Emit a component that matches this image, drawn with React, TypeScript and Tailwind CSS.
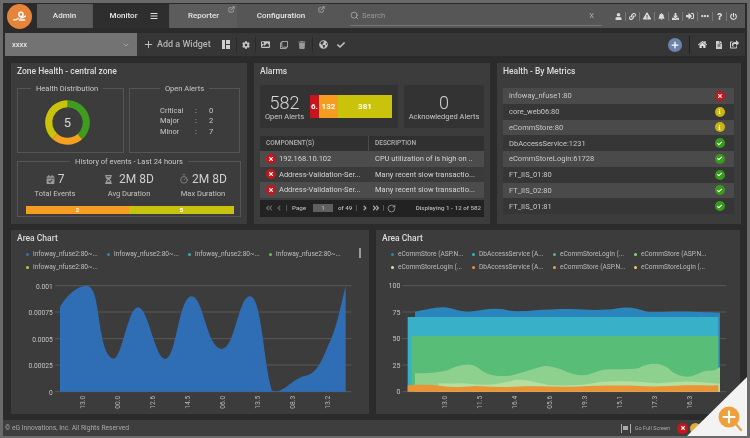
import React from "react";
import { FaUser, FaLink, FaBell, FaDownload, FaSignInAlt, FaEllipsisH, FaQuestion, FaPowerOff, FaCog, FaImage, FaRegClone, FaTrash, FaGlobeAmericas, FaCheck, FaHome, FaFileAlt, FaShareSquare, FaExclamationTriangle, FaBars, FaTimes, FaInfo, FaAngleDoubleLeft, FaAngleDoubleRight, FaAngleLeft, FaAngleRight, FaHourglassHalf, FaCalendarCheck } from "react-icons/fa";
import { ChevronDown, Plus, Search, ExternalLink, RotateCw, Timer } from "lucide-react";

function Card({ title, className, children }: { title: string; className: string; children?: React.ReactNode }) {
  return (
    <section className={`bg-[#3c3c3c] flex flex-col ${className}`}>
      <h2 className="h-[17px] shrink-0 flex items-center text-[8.5px] text-[#dcdcdc] font-medium px-[6px]">{title}</h2>
      {children}
    </section>
  );
}

function Box({ title, className, legendClass, children }: { title: string; className: string; legendClass?: string; children?: React.ReactNode }) {
  return (
    <fieldset className={`border border-[#555] min-w-0 ${className}`}>
      <legend className={`px-[5px] text-[7.5px] leading-[9px] text-[#c8c8c8] ${legendClass ?? "mx-auto"}`}>{title}</legend>
      {children}
    </fieldset>
  );
}

function Status({ kind }: { kind: "x" | "i" | "ok" }) {
  const bg = kind === "x" ? "bg-[#c4161c]" : kind === "i" ? "bg-[#c9b50f]" : "bg-[#399a1d]";
  return (
    <span className={`w-[10px] h-[10px] rounded-full flex items-center justify-center text-white shrink-0 ${bg}`}>
      {kind === "x" && <FaTimes size={6} />}
      {kind === "i" && <FaInfo size={5} />}
      {kind === "ok" && <FaCheck size={5} />}
    </span>
  );
}

const Sep = () => <span className="w-px h-[9px] bg-[#777]" />;

function TopTab({ label, active, ext, className }: { label: string; active?: boolean; ext?: boolean; className: string }) {
  return (
    <div className={`relative h-full flex items-center justify-center text-[8px] font-medium ${active ? "bg-[#2e2e2e] text-[#e6e6e6] pl-[6px]" : "bg-[#5c5c5c] text-[#e4e4e4]"} ${className}`}>
      {label}
      {active && <FaBars size={8} className="ml-[13px] text-[#e0e0e0]" />}
      {ext && <ExternalLink size={7} className="absolute right-[2px] top-[2px] text-[#ccc]" />}
    </div>
  );
}

function Stat({ icon, value, label }: { icon: React.ReactNode; value: string; label: string }) {
  return (
    <div className="flex flex-col items-center w-[75px]">
      <div className="flex items-center gap-[3px] text-[12px] leading-[14px] text-[#d0d0d0]">{icon}<span>{value}</span></div>
      <div className="text-[7.5px] leading-[9px] mt-[2.5px] text-[#c4c4c4] whitespace-nowrap">{label}</div>
    </div>
  );
}

function Donut() {
  const arc = (a: number, b: number) => {
    const p = (d: number) => [50 + 40 * Math.sin((d * Math.PI) / 180), 50 - 40 * Math.cos((d * Math.PI) / 180)];
    const [x1, y1] = p(a);
    const [x2, y2] = p(b);
    return `M${x1} ${y1}A40 40 0 0 1 ${x2} ${y2}`;
  };
  return (
    <div className="relative w-[47px] h-[47px] ml-[26px] mt-[6px]">
      <svg viewBox="0 0 100 100" className="w-full h-full" fill="none" strokeWidth="15">
        <path d={arc(0, 139)} stroke="#3f9c1f" />
        <path d={arc(139, 222)} stroke="#f6a11f" />
        <path d={arc(222, 360)} stroke="#c9c30c" />
      </svg>
      <span className="absolute inset-0 flex items-center justify-center text-[13px] text-[#d8d8d8]">5</span>
    </div>
  );
}

function Legend({ items, colors }: { items: string[]; colors: string[] }) {
  return (
    <div className="grid grid-cols-[repeat(4,81px)] gap-y-[4.5px] pl-[14px] pt-[3px] text-[6.6px] leading-[8.5px] text-[#bdbdbd]">
      {items.map((t, i) => (
        <div key={i} className="flex items-center gap-[4px] whitespace-nowrap">
          <span className="w-[3px] h-[3px] rounded-full ml-[1px]" style={{ background: colors[i] }} />
          {t}
        </div>
      ))}
    </div>
  );
}

const gridYs = [172, 251, 331, 410, 490];

function Left() {
  const labels = ["0.001", "0.00075", "0.0005", "0.00025", "0"];
  const xs: [number, string][] = [[250, "13.0"], [355, "00.0"], [460, "12.6"], [565, "14.5"], [670, "06.0"], [775, "13.5"], [880, "08.3"], [985, "13.2"]];
  return (
    <svg viewBox="33 140 1074 417" className="w-[358px] h-[139px] shrink-0" fontFamily="Roboto, sans-serif">
      {gridYs.map((y, i) => (
        <g key={y}>
          <line x1="165" x2="1054" y1={y} y2={y} stroke="#5f5f5f" strokeWidth="2.5" />
          <text x="158" y={y + 9} textAnchor="end" fontSize="20" fill="#c6c6c6">{labels[i]}</text>
        </g>
      ))}
      <path fill="#2f6db5" d="M180,490 L180,235 C200,200 235,170 260,172 C290,175 290,240 305,320 C315,380 335,395 345,390 C370,370 385,235 415,237 C445,240 465,390 495,392 C530,392 535,205 575,204 C610,204 620,360 665,362 C705,362 715,204 750,204 C785,204 790,400 815,485 C825,495 840,488 860,475 C885,455 900,445 925,440 C950,430 965,400 985,350 C1010,300 1020,240 1037,172 L1037,490 Z" />
      {xs.map(([x, t]) => (
        <text key={t} x={x} y={522} textAnchor="middle" fontSize="20" fill="#b8b8b8" transform={`rotate(-90 ${x} 522)`} dominantBaseline="middle">{t}</text>
      ))}
    </svg>
  );
}

function Right() {
  const labels = ["100", "75", "50", "25", "0"];
  const xs: [number, string][] = [[210, "13.0"], [315, "11.5"], [420, "16.4"], [525, "05.6"], [630, "19.3"], [735, "15.1"], [840, "17.3"], [945, "16.3"]];
  return (
    <svg viewBox="3 140 1092 417" className="w-[364px] h-[139px] shrink-0" fontFamily="Roboto, sans-serif">
      {gridYs.map((y, i) => (
        <g key={y}>
          <line x1="82" x2="1054" y1={y} y2={y} stroke="#5f5f5f" strokeWidth="2.5" />
          <text x="76" y={y + 8} textAnchor="end" fontSize="21" fill="#c6c6c6">{labels[i]}</text>
        </g>
      ))}
      <path fill="#2b85bd" d="M120,490 L120,250 C150,245 180,235 210,237 C235,240 255,252 285,250 C320,246 350,238 385,243 C410,250 440,250 480,246 C530,243 580,240 640,244 C670,246 710,244 730,240 C760,234 785,240 820,251 C860,252 900,249 950,250 C990,252 1010,251 1035,253 L1035,490 Z" />
      <path fill="#38b0c8" d="M98,490 L98,266 L1030,266 L1030,490 Z" />
      <path fill="#58bd76" d="M110,490 L110,323 L1030,323 L1030,490 Z" />
      <path fill="#8ed08e" d="M120,490 L120,435 C150,435 190,433 220,425 C250,410 280,402 305,415 C330,435 350,445 395,443 C430,440 470,420 510,413 C550,412 580,440 620,441 C650,442 660,425 700,423 C730,422 760,425 790,420 C820,404 850,400 880,420 C900,440 925,448 950,444 C975,435 990,425 1010,427 C1020,426 1030,420 1035,416 L1035,490 Z" />
      <path fill="#b3dfa0" d="M190,490 L190,465 C220,467 260,462 290,467 C330,472 370,470 420,455 C450,452 480,462 520,470 C570,473 620,472 680,460 C730,457 780,458 850,465 C890,462 930,456 980,462 L1035,466 L1035,490 Z" />
      <path fill="#ec9335" d="M98,490 L98,471 C130,468 170,469 200,473 C230,478 260,476 300,473 C350,476 400,478 450,474 C500,472 550,477 600,475 C650,472 720,470 780,472 C830,476 880,474 930,471 C970,470 1000,472 1030,471 L1030,490 Z" />
      {xs.map(([x, t]) => (
        <text key={t} x={x} y={522} textAnchor="middle" fontSize="20" fill="#b8b8b8" transform={`rotate(-90 ${x} 522)`} dominantBaseline="middle">{t}</text>
      ))}
    </svg>
  );
}

const metrics: [string, "x" | "i" | "ok"][] = [
  ["infoway_nfuse1:80", "x"],
  ["core_web06:80", "i"],
  ["eCommStore:80", "i"],
  ["DbAccessService:1231", "ok"],
  ["eCommStoreLogin:61728", "ok"],
  ["FT_IIS_01:80", "ok"],
  ["FT_IIS_02:80", "ok"],
  ["FT_IIS_01:81", "ok"],
];

const rows = [
  ["192.168.10.102", "CPU utilization of is high on ..", "bg-[#4c4c4c]"],
  ["Address-Validation-Ser...", "Many recent slow transactio...", "bg-[#3a3a3a]"],
  ["Address-Validation-Ser...", "Many recent slow transactio...", "bg-[#4c4c4c]"],
];

export default function App() {
  return (
    <div className="relative w-[750px] h-[438px] overflow-hidden bg-[#2b2b2b] border-t-[3px] border-l-[3px] border-r-[3px] border-b-[2px] border-[#6a6a6a] flex flex-col font-['Roboto',sans-serif] blur-[0.35px]">
      {/* header */}
      <header className="h-[24px] mt-[1px] ml-[4px] mr-[2px] flex items-center shrink-0">
        <div className="w-[25px] h-[25px] rounded-full bg-[#e8843a] flex items-center justify-center shrink-0">
          <svg viewBox="0 0 24 24" className="w-[17px] h-[17px]" fill="none" stroke="#fff" strokeWidth="2">
            <circle cx="14" cy="9" r="3" />
            <path d="M3 17c4 0 6-1 8-3m0 3h9M13 14c3 0 6-1 8-3" />
          </svg>
        </div>
        <div className="ml-[5px] flex-1 h-full flex items-center bg-[#565656] min-w-0">
          <TopTab label="Admin" className="w-[55px]" />
          <TopTab label="Monitor" active className="w-[76px] ml-px" />
          <TopTab label="Reporter" ext className="w-[67px] ml-px" />
          <TopTab label="Configuration" ext className="w-[88px] ml-[2px] !bg-[#565656] pr-[4px]" />
          <div className="ml-[23px] w-[252px] h-[19px] border-b border-[#747474] flex items-center text-[7.5px] text-[#9a9a9a]">
            <Search size={9} className="text-[#b0b0b0] mr-[3px]" />
            <span className="flex-1">Search</span>
            <span className="mr-[8px] text-[#b0b0b0]">X</span>
          </div>
          <div className="ml-auto pr-[8px] flex items-center gap-[3px] text-[#dcdcdc]">
            <FaUser size={7} /><Sep /><FaLink size={7} /><Sep /><FaExclamationTriangle size={8} /><Sep /><FaBell size={7} /><Sep /><FaDownload size={7} /><Sep /><FaSignInAlt size={8} /><Sep /><FaEllipsisH size={8} /><Sep /><FaQuestion size={7} /><Sep /><FaPowerOff size={7} />
          </div>
        </div>
      </header>
      {/* toolbar */}
      <div className="h-[23px] mt-[5px] ml-[2px] mr-[2px] flex items-center bg-[#363636] shrink-0 text-[#c4c4c4]">
        <div className="w-[132px] h-full bg-[#737373] flex items-center justify-between pl-[7px] pr-[7px] text-[7.5px] text-[#e2e2e2]">
          <span className="font-medium">xxxx</span>
          <ChevronDown size={8} className="text-[#bbb]" />
        </div>
        <Plus size={11} className="ml-[6px] text-[#c8c8c8]" />
        <span className="ml-[3px] text-[9px] font-medium text-[#b4b4b4] whitespace-nowrap">Add a Widget</span>
        <div className="ml-[11px] w-[8px] h-[9px] grid grid-cols-2 grid-rows-2 gap-px shrink-0">
          <span className="row-span-2 bg-[#d0d0d0]" /><span className="bg-[#d0d0d0]" /><span className="bg-[#d0d0d0]" />
        </div>
        <span className="ml-[6px] w-px h-[16px] bg-[#2a2a2a]" />
        <FaCog size={8} className="ml-[5px]" />
        <span className="ml-[5px] w-px h-[16px] bg-[#2a2a2a]" />
        <FaImage size={9} className="ml-[5px]" />
        <FaRegClone size={8} className="ml-[10px]" />
        <FaTrash size={8} className="ml-[10px] text-[#999]" />
        <span className="ml-[6px] w-px h-[16px] bg-[#2a2a2a]" />
        <FaGlobeAmericas size={9} className="ml-[6px]" />
        <FaCheck size={8} className="ml-[9px]" />
        <span className="ml-auto w-[14px] h-[14px] rounded-full bg-[#6b84ab] flex items-center justify-center text-white"><Plus size={10} strokeWidth={3} /></span>
        <span className="ml-[7px] w-px h-[18px] bg-[#222]" />
        <FaHome size={9} className="ml-[8px] text-[#ddd]" />
        <FaFileAlt size={8} className="ml-[8px] text-[#ccc]" />
        <FaShareSquare size={9} className="ml-[7px] mr-[6px] text-[#ccc]" />
      </div>
      {/* row 1 */}
      <div className="mt-[7px] ml-[8px] flex gap-[7px] h-[161px] shrink-0">
        <Card title="Zone Health - central zone" className="w-[236px]">
          <div className="flex gap-[5px] px-[6px] mt-[4px]">
            <Box title="Health Distribution" legendClass="ml-[13px]" className="w-[107px] h-[69px]"><Donut /></Box>
            <Box title="Open Alerts" className="w-[111px] h-[69px]">
              <div className="grid grid-cols-[30px_12px_auto] pl-[30px] pt-[12.5px] text-[7.5px] leading-[10.7px] text-[#c8c8c8]">
                <span>Critical</span><span className="text-center">:</span><span className="pl-[7px]">0</span>
                <span>Major</span><span className="text-center">:</span><span className="pl-[7px]">2</span>
                <span>Minor</span><span className="text-center">:</span><span className="pl-[7px]">7</span>
              </div>
            </Box>
          </div>
          <Box title="History of events - Last 24 hours" className="mx-[6px] mt-[4px] h-[60px]">
            <div className="flex pt-[6px]">
              <Stat icon={<FaCalendarCheck size={9} className="text-[#9a9a9a]" />} value="7" label="Total Events" />
              <Stat icon={<FaHourglassHalf size={9} className="text-[#9a9a9a] mr-[3px]" />} value="2M 8D" label="Avg Duration" />
              <Stat icon={<Timer size={10} className="text-[#8a8a8a]" />} value="2M 8D" label="Max Duration" />
            </div>
            <div className="ml-[8px] mr-[6px] mt-[8.5px] flex h-[8px] text-[6px] leading-[8px] font-bold text-white text-center">
              <span className="w-[103px] bg-[#f59c21]">2</span>
              <span className="flex-1 bg-[#c7c30e]">5</span>
            </div>
          </Box>
        </Card>

        <Card title="Alarms" className="w-[236px]">
          <div className="flex gap-[6px] px-[6px] mt-[5px]">
            <div className="w-[138px] h-[43px] bg-[#333] flex items-center">
              <div className="w-[49px] flex flex-col items-center shrink-0">
                <span className="text-[18px] leading-[19px] font-light text-[#d8d8d8]">582</span>
                <span className="text-[7.5px] leading-[9px] text-[#c8c8c8] whitespace-nowrap">Open Alerts</span>
              </div>
              <div className="w-[82px] h-[23px] flex text-[8px] font-bold text-white text-center leading-[23px] ml-px">
                <span className="w-[9px] bg-[#c5161d]">6.</span>
                <span className="w-[19px] bg-[#f59c21]">132</span>
                <span className="flex-1 bg-[#c9c30c]">381</span>
              </div>
            </div>
            <div className="w-[80px] h-[43px] bg-[#333] flex flex-col items-center justify-center">
              <span className="text-[18px] leading-[19px] font-light text-[#d0d0d0]">0</span>
              <span className="text-[7.5px] leading-[9px] text-[#c8c8c8] whitespace-nowrap">Acknowledged Alerts</span>
            </div>
          </div>
          <div className="mx-[6px] mt-[8px] h-[15px] bg-[#303030] flex text-[6.5px] leading-[15px] font-medium text-[#b0b0b0]">
            <div className="w-[109px] pl-[6px] border-r border-[#4a4a4a]">COMPONENT(S)</div>
            <div className="pl-[6px]">DESCRIPTION</div>
          </div>
          {rows.map((r, i) => (
            <div key={i} className={`mx-[6px] h-[15.6px] flex items-center text-[7.5px] text-[#d4d4d4] whitespace-nowrap ${r[2]}`}>
              <div className="w-[109px] pl-[6px] flex items-center gap-[3px]"><Status kind="x" /><span>{r[0]}</span></div>
              <div className="pl-[6px]">{r[1]}</div>
            </div>
          ))}
          <div className="mx-[6px] mt-[2px] h-[17px] bg-[#222] flex items-center pl-[5px] pr-[3px] text-[6.2px] font-medium text-[#b8b8b8] whitespace-nowrap">
            <FaAngleDoubleLeft size={8} className="text-[#666]" />
            <FaAngleLeft size={8} className="ml-[2px] text-[#666]" />
            <span className="ml-[3px] w-px h-[6px] bg-[#555]" />
            <span className="ml-[5px]">Page</span>
            <span className="ml-[7px] w-[20px] h-[8px] bg-[#5f5f5f] text-center leading-[8px]">1</span>
            <span className="ml-[5px]">of 49</span>
            <span className="ml-[4px] w-px h-[6px] bg-[#555]" />
            <FaAngleRight size={8} className="ml-[4px] text-[#aaa]" />
            <FaAngleDoubleRight size={8} className="ml-[3px] text-[#aaa]" />
            <span className="ml-[3px] w-px h-[6px] bg-[#555]" />
            <RotateCw size={9} className="ml-[3px] text-[#aaa]" />
            <span className="ml-auto">Displaying 1 - 12 of 582</span>
          </div>
        </Card>

        <Card title="Health - By Metrics" className="w-[244px]">
          <div className="ml-[6px] mr-[7.5px] mt-[8px]">
            {metrics.map(([name, k], i) => (
              <div key={name} className={`h-[15.75px] flex items-center justify-between pl-[6px] pr-[9px] text-[7.5px] text-[#c8c8c8] ${i % 2 === 0 ? "bg-[#4a4a4a]" : "bg-[#363636]"}`}>
                <span>{name}</span>
                <Status kind={k} />
              </div>
            ))}
          </div>
        </Card>
      </div>
      {/* row 2 */}
      <div className="mt-[6px] ml-[8px] flex gap-[7px] h-[184px] shrink-0">
        <Card title="Area Chart" className="w-[358px] relative">
          <Legend items={["infoway_nfuse2:80~...", "infoway_nfuse2:80~...", "infoway_nfuse2:80~...", "infoway_nfuse2:80~...", "infoway_nfuse2:80~..."]} colors={["#3b6fb0", "#2b85bd", "#38b0a8", "#6cc04a", "#b5d04a"]} />
          <span className="absolute right-[8px] top-[18px] w-[2px] h-[10px] bg-[#9a9a9a]" />
          <div className="mt-auto"><Left /></div>
        </Card>
        <Card title="Area Chart" className="w-[364px]">
          <Legend items={["eCommStore (ASP.N...", "DbAccessService (A...", "eCommStoreLogin (...", "eCommStore (ASP.N...", "eCommStoreLogin (...", "DbAccessService (A...", "eCommStore (ASP.N...", "eCommStoreLogin (..."]} colors={["#2b85bd", "#38b0c8", "#58bd76", "#8ed08e", "#c8e8b0", "#ec9335", "#e8a83a", "#f0d060"]} />
          <div className="mt-auto"><Right /></div>
        </Card>
      </div>
      {/* footer */}
      <footer className="mt-[6px] flex-1 bg-[#3e3e3e] flex items-center pl-[2px] pr-[46px] text-[6.7px] text-[#a8a8a8]">
        <span>© eG Innovations, Inc. All Rights Reserved</span>
        <span className="ml-auto flex items-center gap-[4px] text-[5.5px]">
          <span className="w-[10px] h-[9px] border-x border-[#aaa] flex items-center justify-center"><span className="w-[5px] h-[4px] bg-[#aaa]" /></span>
          Go Full Screen
        </span>
        <span className="ml-[7px] w-[11px] h-[11px] rounded-full bg-[#c4161c] flex items-center justify-center text-white"><FaTimes size={6} /></span>
        <span className="ml-[2px] w-[11px] h-[11px] rounded-full bg-[#e8a83a]" />
      </footer>
      {/* zoom corner */}
      <div className="absolute right-[-3px] bottom-[-2px] w-[65px] h-[64px] bg-[#f3f3f3] [clip-path:polygon(100%_0,100%_100%,0_100%)]">
        <svg viewBox="0 0 30 30" className="absolute right-[4px] bottom-[4px] w-[30px] h-[30px]">
          <path d="M19 19l6 7" stroke="#e7a043" strokeWidth="2.2" strokeLinecap="round" />
          <circle cx="13" cy="13" r="10.5" fill="#eda03b" />
          <path d="M13 7.5v11M7.5 13h11" stroke="#fff" strokeWidth="2.2" strokeLinecap="round" />
        </svg>
      </div>
    </div>
  );
}
